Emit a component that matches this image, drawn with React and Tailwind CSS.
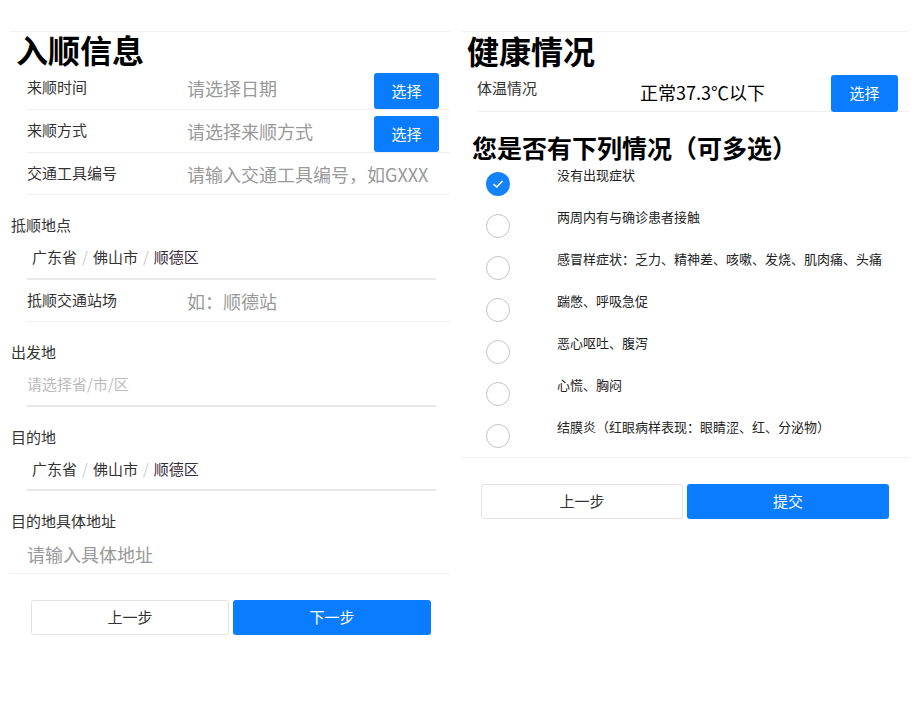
import React from 'react';

const font = { fontFamily: '"Noto Sans CJK SC", "Noto Sans", sans-serif' };

const FieldRow = ({ label, placeholder, button, short }) => (
  <div className={`flex items-start ${short ? 'h-[42px]' : 'h-[43px]'} border-b border-[#efefef] ml-[17px]`}>
    <div className="w-[160px] shrink-0 pt-[10px] text-[15px] leading-[20px] text-[#333]">{label}</div>
    <div className="flex-1 pt-[9px] text-[18px] leading-[24px] text-[#999] whitespace-nowrap">{placeholder}</div>
    {button && (
      <button className="mt-[6px] mr-[11px] w-[65px] h-[36px] rounded-[3px] bg-[#0a7cff] text-white text-[15px]">
        选择
      </button>
    )}
  </div>
);

const Region = ({ label, tight, children }) => (
  <div>
    <div className="pt-[20px] pl-[1px] text-[15px] leading-[20px] text-[#333]">{label}</div>
    <div className={`mt-[12px] ml-[17px] mr-[14px] ${tight ? 'pb-[10px]' : 'pb-[11px]'} border-b-2 border-[#e8e8e8]`}>
      {children}
    </div>
  </div>
);

const Cascade = () => (
  <div className="pl-[5px] text-[15px] leading-[20px] text-[#333]">
    广东省<span className="mx-[5px] text-[#ccc]">/</span>佛山市<span className="mx-[5px] text-[#ccc]">/</span>
    <span className="text-[#3a2a3e]">顺德区</span>
  </div>
);

const symptoms = [
  '没有出现症状',
  '两周内有与确诊患者接触',
  '感冒样症状：乏力、精神差、咳嗽、发烧、肌肉痛、头痛',
  '踹憋、呼吸急促',
  '恶心呕吐、腹泻',
  '心慌、胸闷',
  '结膜炎（红眼病样表现：眼睛涩、红、分泌物）',
];

const Check = ({ on }) =>
  on ? (
    <div className="w-[24px] h-[24px] rounded-full bg-[#1482fb] flex items-center justify-center">
      <svg width="12" height="10" viewBox="0 0 12 10">
        <polyline points="1.5,5 4.7,8 10.5,2" fill="none" stroke="white" strokeWidth="1.6" />
      </svg>
    </div>
  ) : (
    <div className="w-[24px] h-[24px] rounded-full border border-[#c4c4c4] bg-white" />
  );

export default function App() {
  return (
    <div className="w-[920px] h-[708px] bg-white flex pl-[10px] pt-[31px]" style={font}>
      {/* 入顺信息 */}
      <div className="w-[440px] border-t border-[#f1f1f1]">
        <h1 className="ml-[6px] text-[32px] leading-[35px] font-bold text-black">入顺信息</h1>
        <FieldRow label="来顺时间" placeholder="请选择日期" button />
        <FieldRow label="来顺方式" placeholder="请选择来顺方式" button />
        <FieldRow label="交通工具编号" placeholder="请输入交通工具编号，如GXXX" short />
        <Region label="抵顺地点">
          <Cascade />
        </Region>
        <FieldRow label="抵顺交通站场" placeholder="如：顺德站" short />
        <Region label="出发地">
          <div className="text-[15px] leading-[20px] text-[#bbb]">请选择省/市/区</div>
        </Region>
        <Region label="目的地" tight>
          <Cascade />
        </Region>
        <div className="border-b border-[#efefef] pb-[7px]">
          <div className="pt-[20px] pl-[1px] text-[15px] leading-[20px] text-[#333]">目的地具体地址</div>
          <div className="mt-[11px] ml-[17px] text-[18px] leading-[24px] text-[#999]">请输入具体地址</div>
        </div>
        <div className="flex gap-[4px] ml-[21px] mt-[26px]">
          <button className="w-[198px] h-[35px] rounded-[3px] border border-[#e3e3e3] bg-white text-[15px] text-[#333]">
            上一步
          </button>
          <button className="w-[198px] h-[35px] rounded-[3px] bg-[#0a7cff] text-[15px] text-white">下一步</button>
        </div>
      </div>

      {/* 健康情况 */}
      <div className="ml-[11px] w-[448px] border-t border-[#f1f1f1]">
        <h1 className="ml-[6px] text-[32px] leading-[36px] font-bold text-black">健康情况</h1>
        <div className="flex items-start h-[44px] ml-[16px] border-b border-[#efefef]">
          <div className="w-[163px] shrink-0 pt-[10px] text-[15px] leading-[20px] text-[#333]">体温情况</div>
          <div className="flex-1 pt-[12px] text-[18px] leading-[24px] text-black">正常37.3℃以下</div>
          <button className="mt-[7px] mr-[11px] w-[67px] h-[37px] rounded-[3px] bg-[#0a7cff] text-white text-[15px]">
            选择
          </button>
        </div>
        <h2 className="mt-[19px] ml-[11px] text-[25px] leading-[32px] font-bold text-black">您是否有下列情况（可多选）</h2>
        <div className="border-b border-[#efefef]">
          {symptoms.map((s, i) => (
            <div key={s} className="flex items-start h-[42px]">
              <div className="ml-[25px] mt-[9px] w-[71px] shrink-0">
                <Check on={i === 0} />
              </div>
              <div className="mt-[2px] text-[13px] leading-[20px] text-[#222] whitespace-nowrap">{s}</div>
            </div>
          ))}
        </div>
        <div className="flex gap-[4px] ml-[20px] mt-[26px]">
          <button className="w-[202px] h-[35px] rounded-[3px] border border-[#e3e3e3] bg-white text-[15px] text-[#333]">
            上一步
          </button>
          <button className="w-[202px] h-[35px] rounded-[3px] bg-[#0a7cff] text-[15px] text-white">提交</button>
        </div>
      </div>
    </div>
  );
}
